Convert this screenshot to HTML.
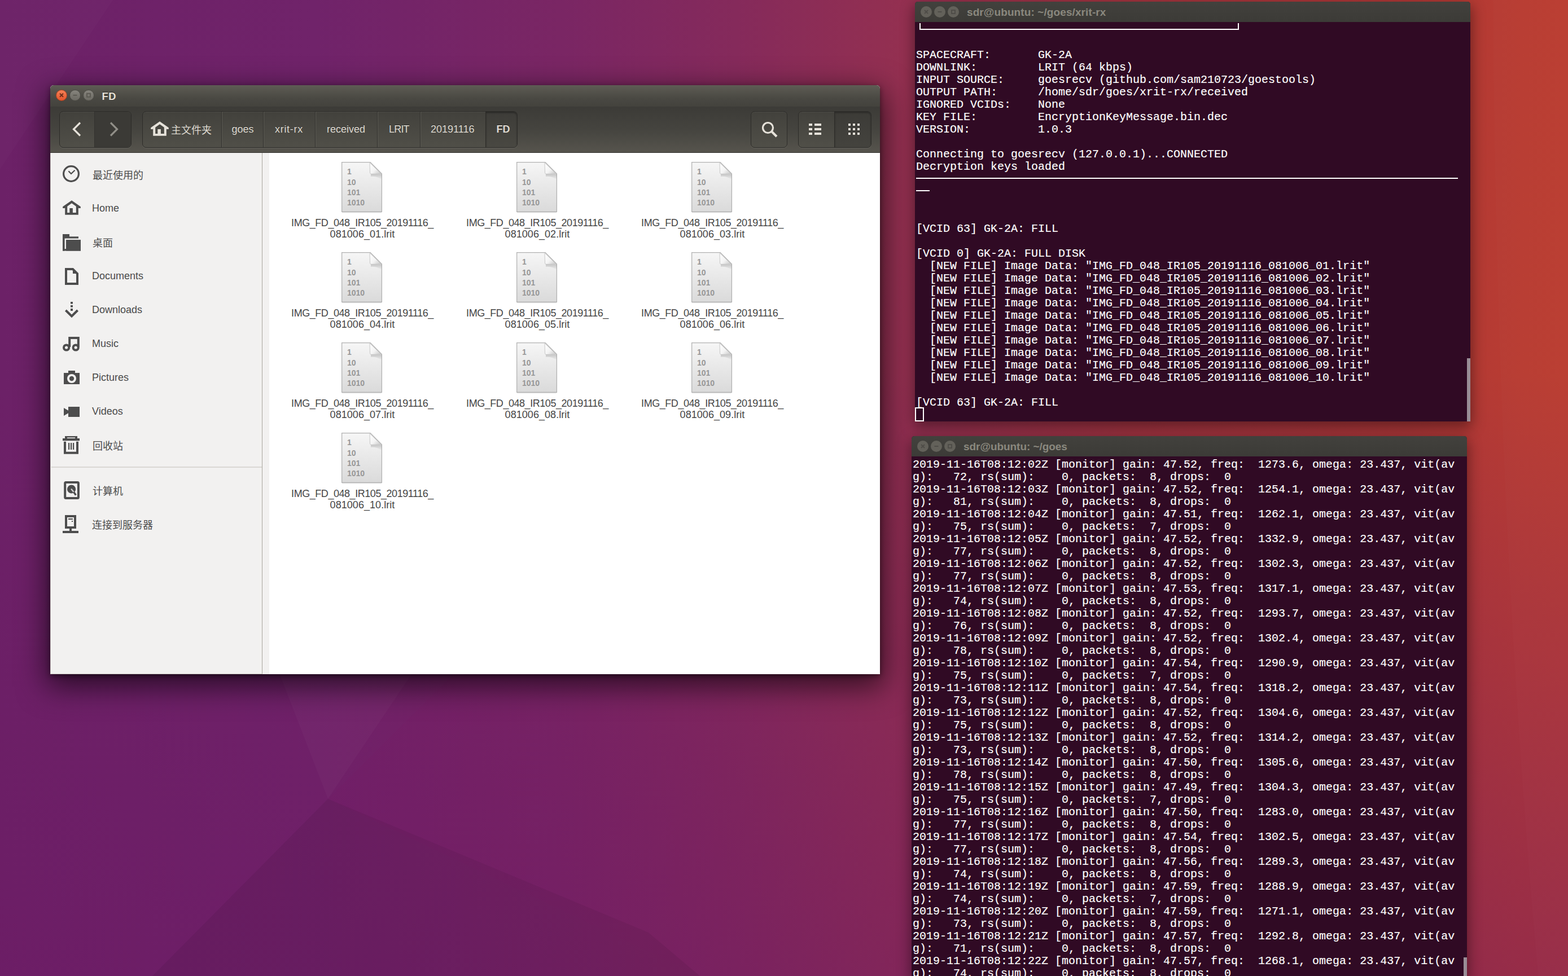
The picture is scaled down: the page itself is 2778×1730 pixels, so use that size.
<!DOCTYPE html>
<html><head><meta charset="utf-8"><title>desktop</title>
<style>
*{box-sizing:border-box;margin:0;padding:0}
html,body{width:2778px;height:1730px;overflow:hidden}
body{position:relative;font-family:"Liberation Sans",sans-serif;background:#6c2166}
.abs{position:absolute}
#wall{position:absolute;left:0;top:0;width:2778px;height:1730px;
 background:
 linear-gradient(180deg,rgba(108,25,100,0) 38%,rgba(108,25,100,.45) 100%),
 linear-gradient(90deg,#6c2167 0,#70236a 20%,#7a2664 36%,#852a5b 47%,#943050 58%,#a2343f 72%,#ae3836 90%,#b93c32 97%,#bb3d31 100%)}
.win{position:absolute;overflow:hidden}
pre{font-family:"Liberation Mono",monospace;font-size:20px;line-height:22px;color:#fff;position:absolute;white-space:pre;-webkit-text-stroke:.15px #fff}
.tbar{position:absolute;left:0;top:0;right:0;height:36px;background:linear-gradient(#42413d,#3c3b37)}
.tbtn{position:absolute;width:20px;height:20px;border-radius:50%;background:#63615a}
.ttl{position:absolute;font-weight:bold;font-size:19px;letter-spacing:-.05px;color:#8a887e;white-space:nowrap;line-height:20px}
.ln{position:absolute;background:#fff}
.sb{position:absolute;left:163px;font-size:18px;color:#4a4a4a;line-height:20px;white-space:nowrap}
.pb{position:absolute;font-size:18px;color:#dfdbd2;line-height:20px;white-space:nowrap;text-shadow:0 -1px 0 rgba(0,0,0,.45)}
.fl{position:absolute;width:300px;text-align:center;font-size:18px;line-height:20px;color:#454545;letter-spacing:-.45px;white-space:nowrap}
.btn{position:absolute;border-radius:7px;border:1px solid #2d2c29;box-shadow:0 1px 0 rgba(255,255,255,.10),inset 0 1px 0 rgba(255,255,255,.06);background:linear-gradient(#42413c,#504f48)}
.dv{position:absolute;width:2px;background:linear-gradient(90deg,#31302d 50%,#5b5a53 50%)}
.cjk{font-family:"Liberation Sans","Noto Sans CJK SC",sans-serif;font-size:18px}
</style></head><body>
<div id="wall"></div>

<svg class="abs" style="left:0;top:0" width="2778" height="1730" viewBox="0 0 2778 1730">
<polygon points="420,1000 860,1000 581,1416" fill="#ffffff" opacity=".025"/>
<polygon points="581,1416 270,1730 1240,1730 1149,1653" fill="#000000" opacity=".06"/>
<defs><linearGradient id="wg" gradientUnits="userSpaceOnUse" x1="600" y1="0" x2="1500" y2="0"><stop offset="0" stop-color="#7a1060" stop-opacity=".10"/><stop offset="1" stop-color="#7a1060" stop-opacity="0"/></linearGradient></defs><polygon points="581,1416 1000,1000 1640,1000 1640,1730 1240,1730" fill="url(#wg)"/>
<polygon points="0,0 200,0 0,300" fill="#ffffff" opacity=".015"/>
<path d="M2645,0 Q2650,900 2725,1730 L2778,1730 L2778,0Z" fill="#ffffff" opacity=".012"/>
</svg>

<div class="abs" style="left:89px;top:151px;width:1470px;height:1043.5px;border-radius:6px 6px 0 0;box-shadow:0 16px 52px 6px rgba(0,0,0,.62),0 3px 10px rgba(0,0,0,.45)"></div>
<div class="win" style="left:89px;top:151px;width:1470px;height:1043.5px;border-radius:6px 6px 0 0;background:#fff">
<div class="abs" style="left:0;top:0;width:1470px;height:38px;background:linear-gradient(#5e5c54,#4a4943 60%,#43423d)"></div>
<div class="abs" style="left:0;top:38px;width:1470px;height:82px;background:linear-gradient(#3c3b37,#45443f 50%,#56544d);border-bottom:1px solid #33322e"></div>
<div class="abs" style="left:10px;top:7.5px;width:20px;height:20px;border-radius:50%;background:linear-gradient(#f58157,#e4552c);border:1px solid #a8401f"></div>
<div class="abs" style="left:34px;top:7.5px;width:20px;height:20px;border-radius:50%;background:linear-gradient(#86847d,#6c6a63);border:1px solid #4b4a44"></div>
<div class="abs" style="left:58px;top:7.5px;width:20px;height:20px;border-radius:50%;background:linear-gradient(#86847d,#6c6a63);border:1px solid #4b4a44"></div>
<div class="abs" style="left:91.5px;top:10px;font-weight:bold;font-size:18.3px;line-height:20px;color:#e8e4da;letter-spacing:.5px;text-shadow:0 -1px 0 rgba(0,0,0,.6)">FD</div>
<div class="btn" style="left:16px;top:46px;width:128px;height:65px;"></div>
<div class="abs" style="left:78px;top:47px;width:65px;height:63px;border-radius:0 6px 6px 0;background:#3b3a36;border-left:1px solid #33322f"></div>
<div class="btn" style="left:163px;top:46px;width:665px;height:65px;"></div>
<div class="dv" style="left:303px;top:47px;height:63px"></div>
<div class="dv" style="left:377px;top:47px;height:63px"></div>
<div class="dv" style="left:469px;top:47px;height:63px"></div>
<div class="dv" style="left:579px;top:47px;height:63px"></div>
<div class="dv" style="left:655px;top:47px;height:63px"></div>
<div class="abs" style="left:771px;top:47px;width:56px;height:63px;border-radius:0 6px 6px 0;background:linear-gradient(#3d3c38,#494842);border-left:1px solid #2c2b28;box-shadow:inset 0 2px 3px rgba(0,0,0,.35)"></div>
<div class="btn" style="left:1241px;top:46px;width:65px;height:65px;"></div>
<div class="btn" style="left:1325px;top:46px;width:130px;height:65px;"></div>
<div class="abs" style="left:1389px;top:47px;width:65px;height:63px;border-radius:0 6px 6px 0;background:linear-gradient(#3c3b37,#44433e);border-left:1px solid #2c2b28;box-shadow:inset 0 2px 3px rgba(0,0,0,.3)"></div>
<div class="pb" style="left:321.5px;top:68px;letter-spacing:0px;">goes</div>
<div class="pb" style="left:398px;top:68px;letter-spacing:0.7px;">xrit-rx</div>
<div class="pb" style="left:490px;top:68px;letter-spacing:0px;">received</div>
<div class="pb" style="left:600px;top:68px;letter-spacing:-0.8px;">LRIT</div>
<div class="pb" style="left:674px;top:68px;letter-spacing:0px;">20191116</div>
<div class="pb" style="left:790.5px;top:68px;letter-spacing:0px;font-weight:bold;">FD</div>
<div class="abs" style="left:0;top:120px;width:376px;height:924px;background:#f2f1f0;border-left:1.5px solid #cfccc6;border-right:1.5px solid #a9a69f;border-bottom:1px solid #d5d2cc"></div>
<div class="abs" style="left:376px;top:120px;width:12px;height:924px;background:#f2f1f0"></div>
<div class="abs" style="left:2px;top:676px;width:373px;height:2px;background:#dad8d4"></div>
<div class="sb" style="left:74px;top:207.6px">Home</div>
<div class="sb" style="left:74px;top:327.6px">Documents</div>
<div class="sb" style="left:74px;top:387.6px">Downloads</div>
<div class="sb" style="left:74px;top:447.6px">Music</div>
<div class="sb" style="left:74px;top:507.6px">Pictures</div>
<div class="sb" style="left:74px;top:567.6px">Videos</div>
</div>
<svg class="abs" style="left:303.4px;top:220.5px" width="74" height="22" viewBox="0 0 74 22" fill="#dfdbd2"><text class="cjk" x="0" y="15.8" font-size="18">主文件夹</text></svg>
<svg class="abs" style="left:163.5px;top:300.5px" width="92" height="22" viewBox="0 0 92 22" fill="#4c4c4c"><text class="cjk" x="0" y="15.8" font-size="18">最近使用的</text></svg>
<svg class="abs" style="left:163.5px;top:420.5px" width="38" height="22" viewBox="0 0 38 22" fill="#4c4c4c"><text class="cjk" x="0" y="15.8" font-size="18">桌面</text></svg>
<svg class="abs" style="left:163.5px;top:780.5px" width="56" height="22" viewBox="0 0 56 22" fill="#4c4c4c"><text class="cjk" x="0" y="15.8" font-size="18">回收站</text></svg>
<svg class="abs" style="left:163.5px;top:860.5px" width="56" height="22" viewBox="0 0 56 22" fill="#4c4c4c"><text class="cjk" x="0" y="15.8" font-size="18">计算机</text></svg>
<svg class="abs" style="left:163px;top:920.5px" width="110" height="22" viewBox="0 0 110 22" fill="#4c4c4c"><text class="cjk" x="0" y="15.8" font-size="18">连接到服务器</text></svg>
<svg class="abs" style="left:0;top:0" width="2778" height="1730" viewBox="0 0 2778 1730">
<g stroke="#6e2f1c" stroke-width="2"><path d="M106,165.8 l6,6 M112,165.8 l-6,6"/></g>
<g stroke="#5c5a53" stroke-width="2" fill="none"><path d="M129.5,168.8 h7"/><rect x="154" y="165.8" width="6" height="6"/></g>
<g fill="none" stroke="#e6e2da" stroke-width="3.2"><path d="M142,217.5 L130.5,229 L142,240.5"/></g>
<g fill="none" stroke="#918f88" stroke-width="3.2"><path d="M196,217.5 L207.5,229 L196,240.5"/></g>
<g transform="translate(156 -140)" fill="#e6e2da"><path d="M127,355.2 L142.8,366.3 V368.9 H139.4 L127,360.2 L114.6,368.9 H111.2 V366.3Z"/><path d="M115.2,366.5 L119.2,363.8 V376.9 H134.8 V363.8 L138.8,366.5 V380.8 H115.2Z"/><rect x="123.3" y="369" width="5.6" height="9"/></g>
<g fill="none" stroke="#e6e2da"><circle cx="1360.5" cy="226.5" r="9" stroke-width="3.2"/><path d="M1367.5,233.5 L1376,242" stroke-width="4"/></g>
<g fill="#e6e2da">
<rect x="1433" y="219" width="6" height="4"/><rect x="1443" y="219" width="12" height="4"/>
<rect x="1503" y="219" width="4" height="4"/>
<rect x="1511" y="219" width="4" height="4"/>
<rect x="1519" y="219" width="4" height="4"/>
<rect x="1433" y="227" width="6" height="4"/><rect x="1443" y="227" width="12" height="4"/>
<rect x="1503" y="227" width="4" height="4"/>
<rect x="1511" y="227" width="4" height="4"/>
<rect x="1519" y="227" width="4" height="4"/>
<rect x="1433" y="235" width="6" height="4"/><rect x="1443" y="235" width="12" height="4"/>
<rect x="1503" y="235" width="4" height="4"/>
<rect x="1511" y="235" width="4" height="4"/>
<rect x="1519" y="235" width="4" height="4"/>
</g>
<g fill="none" stroke="#4d4d4d"><circle cx="126" cy="308" r="13.4" stroke-width="3.2"/><path d="M121.4,303.3 L126,308 L132.6,301.8" stroke-width="2.2"/></g>
<g transform="translate(0 0)" fill="#4d4d4d"><path d="M127,355.2 L142.8,366.3 V368.9 H139.4 L127,360.2 L114.6,368.9 H111.2 V366.3Z"/><path d="M115.2,366.5 L119.2,363.8 V376.9 H134.8 V363.8 L138.8,366.5 V380.8 H115.2Z"/><rect x="123.3" y="369" width="5.6" height="9"/></g>
<g fill="#4d4d4d"><rect x="111" y="415" width="12" height="5"/><rect x="111" y="419.3" width="28" height="3.3"/><rect x="111" y="419.3" width="3.6" height="25.3"/><rect x="111" y="441.2" width="32" height="3.4"/><rect x="117" y="425" width="26" height="19.6"/></g>
<g fill="none" stroke="#4d4d4d" stroke-width="4"><path d="M117,477 H129 L137,485 V503 H117 Z" stroke-linejoin="miter"/><path d="M129,477 V485 H137 Z" fill="#4d4d4d" stroke="none"/></g>
<g fill="#4d4d4d"><rect x="125" y="535" width="4" height="3.6"/><rect x="125" y="541" width="4" height="3.6"/><rect x="125" y="547" width="4" height="4"/></g><path d="M116.4,550 L127,560.4 L137.6,550" fill="none" stroke="#4d4d4d" stroke-width="4"/>
<g fill="none" stroke="#4d4d4d" stroke-width="4"><path d="M123.2,615 V599 H138.8 V615"/><circle cx="117.6" cy="616" r="4.6"/><circle cx="134.2" cy="616" r="4.6"/></g>
<g fill="#4d4d4d"><rect x="113" y="661" width="28" height="20"/><rect x="121" y="657" width="12" height="5"/><circle cx="127" cy="671" r="8" fill="#f2f1f0"/><circle cx="127" cy="671" r="4.2"/></g>
<g fill="#4d4d4d"><rect x="121" y="721" width="20" height="18"/><path d="M113,723 L121.5,728 V732 L113,737Z"/></g>
<g fill="#4d4d4d"><rect x="111" y="777" width="30" height="4.2"/><path d="M115,773 H137 V777.5 H133 V775.6 H119 V777.5 H115Z"/><rect x="121" y="785" width="2.2" height="12"/><rect x="125" y="785" width="2.2" height="12"/><rect x="129" y="785" width="2.2" height="12"/></g><path d="M115,782.8 V802.8 H137 V782.8" fill="none" stroke="#4d4d4d" stroke-width="4"/>
<rect x="115.2" y="855" width="23.7" height="28" rx="1.5" fill="none" stroke="#4d4d4d" stroke-width="4"/><circle cx="126.6" cy="867" r="7.6" fill="#4d4d4d"/><path d="M126,866.5 L131,872.5" stroke="#cfcfcf" stroke-width="2.4"/><path d="M130.5,872 L134.4,877.6" stroke="#4d4d4d" stroke-width="3.4"/>
<rect x="117" y="915" width="16" height="20" fill="none" stroke="#4d4d4d" stroke-width="4"/><g fill="#4d4d4d"><rect x="123" y="936" width="4" height="6"/><rect x="111" y="941" width="28" height="4"/><rect x="121" y="919" width="8" height="2"/><rect x="127" y="923" width="2" height="2"/></g>
</svg>
<svg width="0" height="0" style="position:absolute"><defs>
<linearGradient id="pg" x1="0" y1="0" x2="0" y2="1"><stop offset="0" stop-color="#f6f6f6"/><stop offset="1" stop-color="#dadada"/></linearGradient>
<linearGradient id="sh" x1="0" y1="0" x2="0" y2="1"><stop offset="0" stop-color="#000" stop-opacity=".17"/><stop offset="1" stop-color="#000" stop-opacity="0"/></linearGradient>
<linearGradient id="fg" x1="0" y1="0" x2="1" y2="1"><stop offset="0" stop-color="#ffffff"/><stop offset=".55" stop-color="#f4f4f4"/><stop offset="1" stop-color="#c4c4c4"/></linearGradient>
<g id="fi"><path d="M.6,.6 H51 L71.4,21 V88.4 H.6Z" fill="url(#pg)" stroke="#b2b2b2" stroke-width="1.3"/>
<path d="M52,21.5 H71 V31 Q62,25 52,26Z" fill="url(#sh)"/><rect x="1" y="88.8" width="70" height="1.6" fill="#000" opacity=".10"/><path d="M50,1.5 L50.5,19.5 Q51,21.5 53,21.5 L70.5,21Z" fill="url(#fg)" stroke="#bdbdbd" stroke-width=".8"/>
<g font-family="Liberation Sans, sans-serif" font-size="14" font-weight="bold" fill="#969696"><text x="10" y="22.3">1</text><text x="10" y="40.5">10</text><text x="10" y="58.8">101</text><text x="10" y="77">1010</text></g></g>
</defs></svg>
<svg class="abs" style="left:605px;top:287px" width="73" height="91" viewBox="0 0 73 91"><use href="#fi"/></svg>
<div class="fl" style="left:492px;top:384.5px">IMG_FD_048_IR105_20191116_<br><span style="letter-spacing:.05px">081006_01.lrit</span></div>
<svg class="abs" style="left:915px;top:287px" width="73" height="91" viewBox="0 0 73 91"><use href="#fi"/></svg>
<div class="fl" style="left:802px;top:384.5px">IMG_FD_048_IR105_20191116_<br><span style="letter-spacing:.05px">081006_02.lrit</span></div>
<svg class="abs" style="left:1225px;top:287px" width="73" height="91" viewBox="0 0 73 91"><use href="#fi"/></svg>
<div class="fl" style="left:1112px;top:384.5px">IMG_FD_048_IR105_20191116_<br><span style="letter-spacing:.05px">081006_03.lrit</span></div>
<svg class="abs" style="left:605px;top:447px" width="73" height="91" viewBox="0 0 73 91"><use href="#fi"/></svg>
<div class="fl" style="left:492px;top:544.5px">IMG_FD_048_IR105_20191116_<br><span style="letter-spacing:.05px">081006_04.lrit</span></div>
<svg class="abs" style="left:915px;top:447px" width="73" height="91" viewBox="0 0 73 91"><use href="#fi"/></svg>
<div class="fl" style="left:802px;top:544.5px">IMG_FD_048_IR105_20191116_<br><span style="letter-spacing:.05px">081006_05.lrit</span></div>
<svg class="abs" style="left:1225px;top:447px" width="73" height="91" viewBox="0 0 73 91"><use href="#fi"/></svg>
<div class="fl" style="left:1112px;top:544.5px">IMG_FD_048_IR105_20191116_<br><span style="letter-spacing:.05px">081006_06.lrit</span></div>
<svg class="abs" style="left:605px;top:607px" width="73" height="91" viewBox="0 0 73 91"><use href="#fi"/></svg>
<div class="fl" style="left:492px;top:704.5px">IMG_FD_048_IR105_20191116_<br><span style="letter-spacing:.05px">081006_07.lrit</span></div>
<svg class="abs" style="left:915px;top:607px" width="73" height="91" viewBox="0 0 73 91"><use href="#fi"/></svg>
<div class="fl" style="left:802px;top:704.5px">IMG_FD_048_IR105_20191116_<br><span style="letter-spacing:.05px">081006_08.lrit</span></div>
<svg class="abs" style="left:1225px;top:607px" width="73" height="91" viewBox="0 0 73 91"><use href="#fi"/></svg>
<div class="fl" style="left:1112px;top:704.5px">IMG_FD_048_IR105_20191116_<br><span style="letter-spacing:.05px">081006_09.lrit</span></div>
<svg class="abs" style="left:605px;top:767px" width="73" height="91" viewBox="0 0 73 91"><use href="#fi"/></svg>
<div class="fl" style="left:492px;top:864.5px">IMG_FD_048_IR105_20191116_<br><span style="letter-spacing:.05px">081006_10.lrit</span></div>
<div class="abs" style="left:1621px;top:3px;width:984px;height:743.8px;border-radius:5px 5px 0 0;box-shadow:0 8px 24px 2px rgba(0,0,0,.42)"></div>
<div class="win" style="left:1621px;top:3px;width:984px;height:743.8px;border-radius:5px 5px 0 0;background:#300a24">
<div class="tbar"></div>
<div class="tbtn" style="left:10px;top:8px"></div>
<div class="tbtn" style="left:34px;top:8px"></div>
<div class="tbtn" style="left:58px;top:8px"></div>
<div class="ttl" style="left:92px;top:9.3px;letter-spacing:.1px">sdr@ubuntu: ~/goes/xrit-rx</div>
<pre style="left:2px;top:84px">SPACECRAFT:       GK-2A
DOWNLINK:         LRIT (64 kbps)
INPUT SOURCE:     goesrecv (github.com/sam210723/goestools)
OUTPUT PATH:      /home/sdr/goes/xrit-rx/received
IGNORED VCIDs:    None
KEY FILE:         EncryptionKeyMessage.bin.dec
VERSION:          1.0.3

Connecting to goesrecv (127.0.0.1)...CONNECTED
Decryption keys loaded




[VCID 63] GK-2A: FILL

[VCID 0] GK-2A: FULL DISK
  [NEW FILE] Image Data: &quot;IMG_FD_048_IR105_20191116_081006_01.lrit&quot;
  [NEW FILE] Image Data: &quot;IMG_FD_048_IR105_20191116_081006_02.lrit&quot;
  [NEW FILE] Image Data: &quot;IMG_FD_048_IR105_20191116_081006_03.lrit&quot;
  [NEW FILE] Image Data: &quot;IMG_FD_048_IR105_20191116_081006_04.lrit&quot;
  [NEW FILE] Image Data: &quot;IMG_FD_048_IR105_20191116_081006_05.lrit&quot;
  [NEW FILE] Image Data: &quot;IMG_FD_048_IR105_20191116_081006_06.lrit&quot;
  [NEW FILE] Image Data: &quot;IMG_FD_048_IR105_20191116_081006_07.lrit&quot;
  [NEW FILE] Image Data: &quot;IMG_FD_048_IR105_20191116_081006_08.lrit&quot;
  [NEW FILE] Image Data: &quot;IMG_FD_048_IR105_20191116_081006_09.lrit&quot;
  [NEW FILE] Image Data: &quot;IMG_FD_048_IR105_20191116_081006_10.lrit&quot;

[VCID 63] GK-2A: FILL</pre>
<div class="ln" style="left:7.5px;top:38px;width:2px;height:12px"></div>
<div class="ln" style="left:571.5px;top:38px;width:2px;height:12px"></div>
<div class="ln" style="left:7.5px;top:48px;width:566px;height:2px"></div>
<div class="ln" style="left:2px;top:312px;width:960px;height:2px"></div>
<div class="ln" style="left:2px;top:334px;width:24px;height:2px"></div>
<div class="abs" style="left:0;top:718.5px;width:16px;height:25.5px;border:2px solid #fff"></div>
<div class="abs" style="left:977.5999999999999px;top:632px;width:6.4px;height:112px;background:#998d96"></div>
</div>
<div class="abs" style="left:1615px;top:773px;width:984px;height:960px;border-radius:5px 5px 0 0;box-shadow:0 8px 24px 2px rgba(0,0,0,.42)"></div>
<div class="win" style="left:1615px;top:773px;width:984px;height:960px;border-radius:5px 5px 0 0;background:#300a24">
<div class="tbar"></div>
<div class="tbtn" style="left:10px;top:8px"></div>
<div class="tbtn" style="left:34px;top:8px"></div>
<div class="tbtn" style="left:58px;top:8px"></div>
<div class="ttl" style="left:92px;top:9.3px">sdr@ubuntu: ~/goes</div>
<pre style="left:2px;top:40px">2019-11-16T08:12:02Z [monitor] gain: 47.52, freq:  1273.6, omega: 23.437, vit(av
g):   72, rs(sum):    0, packets:  8, drops:  0
2019-11-16T08:12:03Z [monitor] gain: 47.52, freq:  1254.1, omega: 23.437, vit(av
g):   81, rs(sum):    0, packets:  8, drops:  0
2019-11-16T08:12:04Z [monitor] gain: 47.51, freq:  1262.1, omega: 23.437, vit(av
g):   75, rs(sum):    0, packets:  7, drops:  0
2019-11-16T08:12:05Z [monitor] gain: 47.52, freq:  1332.9, omega: 23.437, vit(av
g):   77, rs(sum):    0, packets:  8, drops:  0
2019-11-16T08:12:06Z [monitor] gain: 47.52, freq:  1302.3, omega: 23.437, vit(av
g):   77, rs(sum):    0, packets:  8, drops:  0
2019-11-16T08:12:07Z [monitor] gain: 47.53, freq:  1317.1, omega: 23.437, vit(av
g):   74, rs(sum):    0, packets:  8, drops:  0
2019-11-16T08:12:08Z [monitor] gain: 47.52, freq:  1293.7, omega: 23.437, vit(av
g):   76, rs(sum):    0, packets:  8, drops:  0
2019-11-16T08:12:09Z [monitor] gain: 47.52, freq:  1302.4, omega: 23.437, vit(av
g):   78, rs(sum):    0, packets:  8, drops:  0
2019-11-16T08:12:10Z [monitor] gain: 47.54, freq:  1290.9, omega: 23.437, vit(av
g):   75, rs(sum):    0, packets:  7, drops:  0
2019-11-16T08:12:11Z [monitor] gain: 47.54, freq:  1318.2, omega: 23.437, vit(av
g):   73, rs(sum):    0, packets:  8, drops:  0
2019-11-16T08:12:12Z [monitor] gain: 47.52, freq:  1304.6, omega: 23.437, vit(av
g):   75, rs(sum):    0, packets:  8, drops:  0
2019-11-16T08:12:13Z [monitor] gain: 47.52, freq:  1314.2, omega: 23.437, vit(av
g):   73, rs(sum):    0, packets:  8, drops:  0
2019-11-16T08:12:14Z [monitor] gain: 47.50, freq:  1305.6, omega: 23.437, vit(av
g):   78, rs(sum):    0, packets:  8, drops:  0
2019-11-16T08:12:15Z [monitor] gain: 47.49, freq:  1304.3, omega: 23.437, vit(av
g):   75, rs(sum):    0, packets:  7, drops:  0
2019-11-16T08:12:16Z [monitor] gain: 47.50, freq:  1283.0, omega: 23.437, vit(av
g):   77, rs(sum):    0, packets:  8, drops:  0
2019-11-16T08:12:17Z [monitor] gain: 47.54, freq:  1302.5, omega: 23.437, vit(av
g):   77, rs(sum):    0, packets:  8, drops:  0
2019-11-16T08:12:18Z [monitor] gain: 47.56, freq:  1289.3, omega: 23.437, vit(av
g):   74, rs(sum):    0, packets:  8, drops:  0
2019-11-16T08:12:19Z [monitor] gain: 47.59, freq:  1288.9, omega: 23.437, vit(av
g):   74, rs(sum):    0, packets:  7, drops:  0
2019-11-16T08:12:20Z [monitor] gain: 47.59, freq:  1271.1, omega: 23.437, vit(av
g):   73, rs(sum):    0, packets:  8, drops:  0
2019-11-16T08:12:21Z [monitor] gain: 47.57, freq:  1292.8, omega: 23.437, vit(av
g):   71, rs(sum):    0, packets:  8, drops:  0
2019-11-16T08:12:22Z [monitor] gain: 47.57, freq:  1268.1, omega: 23.437, vit(av
g):   74, rs(sum):    0, packets:  8, drops:  0</pre>
<div class="abs" style="left:977.5999999999999px;top:924px;width:6.4px;height:40px;background:#998d96"></div>
</div>
<svg class="abs" style="left:0;top:0" width="2778" height="1730" viewBox="0 0 2778 1730"><g stroke="#4f4d48" stroke-width="2" fill="none">
<path d="M1638,18 l6,6 M1644,18 l-6,6 M1661.5,21 h7"/><rect x="1686" y="18" width="6" height="6"/>
<path d="M1632,788 l6,6 M1638,788 l-6,6 M1655.5,791 h7"/><rect x="1680" y="788" width="6" height="6"/>
</g></svg>
</body></html>
